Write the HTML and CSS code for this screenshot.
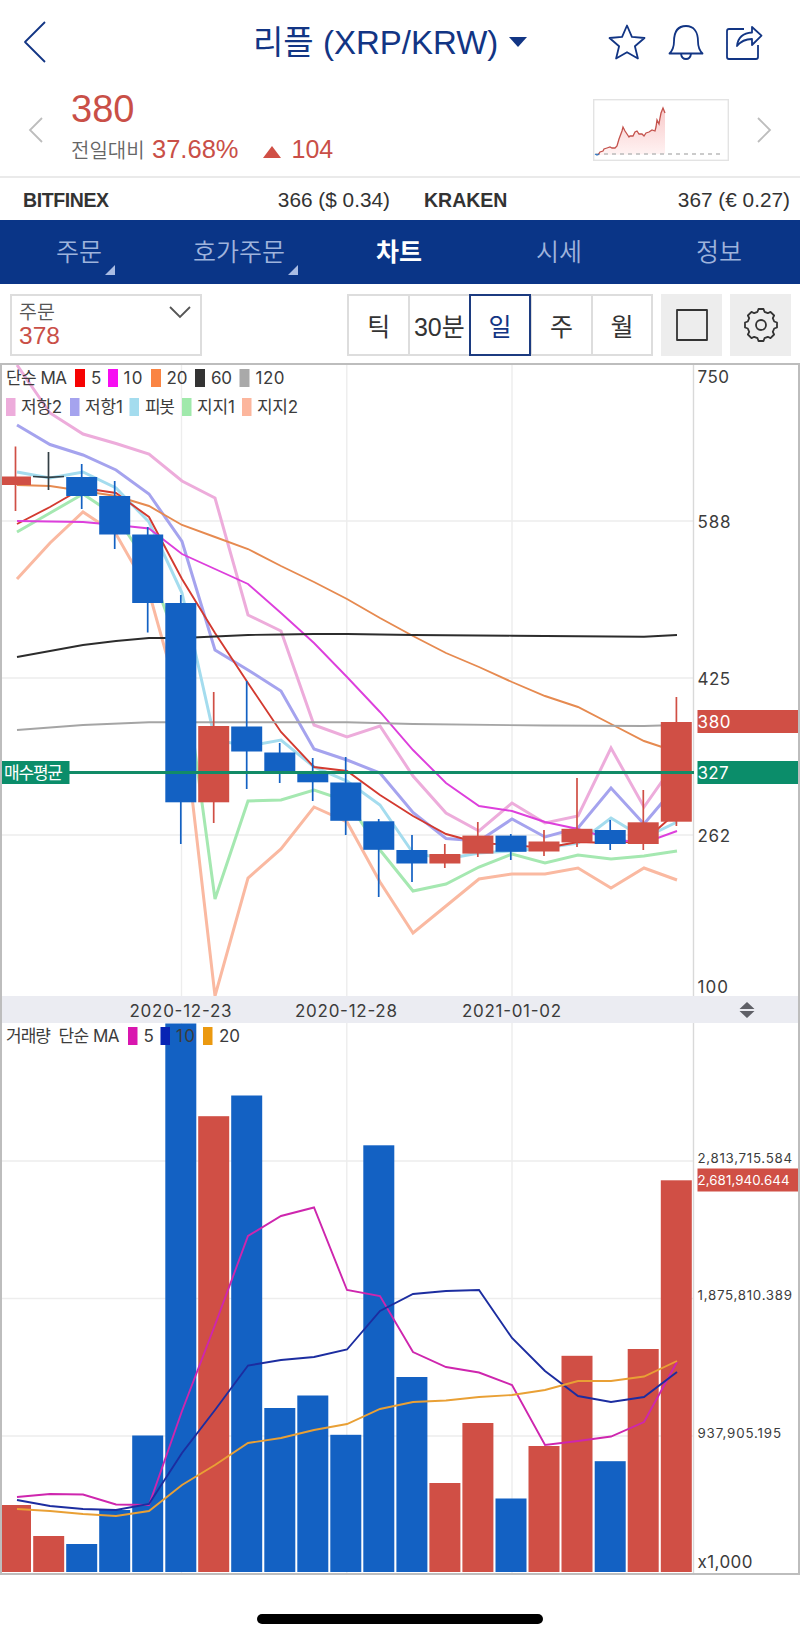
FILE: index.html
```html
<!DOCTYPE html>
<html lang="ko">
<head>
  <meta charset="utf-8">
  <title>리플 (XRP/KRW)</title>
  <link rel="stylesheet" href="styles.css">
</head>
<body>
  <header class="header">
    <svg class="back" width="24" height="44" viewBox="0 0 24 44"><path d="M22 2 2 22 22 42"/></svg>
    <h1 class="title">리플 (XRP/KRW)</h1>
    <span class="caret"></span>
    <div class="headerIcons">
      <svg width="38" height="38" viewBox="0 0 38 38"><path d="M19 2.500l4.900 11.300 12.600 1.200-9.600 8.300 3 12.200L19 29.200 8.100 35.500l3-12.200L1.500 15l12.600-1.200z"/></svg>
      <svg width="38" height="38" viewBox="0 0 38 38"><path d="M2.500 30.500c2.800-2.800 4.500-5.500 4.500-12C7 9 11 3 19 3s12 6 12 15.500c0 6.500 1.700 9.200 4.500 12zM14 31c.5 3.300 2.300 5 5 5s4.500-1.700 5-5"/></svg>
      <svg width="38" height="38" viewBox="2 0 38 38"><path d="M20 6H5Q3 6 3 8v26q0 2 2 2h27q2 0 2-2V22M13 23c1-9 6-13 15-13.500V4l9.500 8.700L28 22v-6c-7 0-11 2-15 7z"/></svg>
    </div>
  </header>

  <section class="summary">
    <svg class="arrow" width="16" height="26" viewBox="0 0 16 26"><path d="M14 1 2 13 14 25"/></svg>
    <div class="price">
      <div class="priceNow">380</div>
      <div class="change">
        <span class="changeLabel">전일대비</span>
        <span class="changeRate">37.68%</span>
        <span class="upMark"></span>
        <span class="changeValue">104</span>
      </div>
    </div>
    <svg class="spark" width="136" height="62" viewBox="593 99 136 62">
      <defs>
        <linearGradient id="fade" x1="0" y1="0" x2="0" y2="1">
          <stop offset="0" stop-color="#f8c9c9"/>
          <stop offset="1" stop-color="#fff3f3"/>
        </linearGradient>
      </defs>
      <rect class="sparkBox" x="593.7" y="99.700" width="134.600" height="60.600"/>
      <path fill="url(#fade)" d="M598 155l2-3 3-1 1-2 3-1 3-1 2 1 3 0 2-2 2-7 3-8 1-4 2 4 2 3 2 3 1-1 3 0 2-4 2-1 2 3 3 0 2 2 2-3 3-1 3-2 3 1 1-4 1-7 2 4 1-6 1-5 2-5 2 5V154z"/>
      <path class="sparkBase" d="M596 154H724"/>
      <path class="sparkLine" d="M598 155l2-3 3-1 1-2 3-1 3-1 2 1 3 0 2-2 2-7 3-8 1-4 2 4 2 3 2 3 1-1 3 0 2-4 2-1 2 3 3 0 2 2 2-3 3-1 3-2 3 1 1-4 1-7 2 4 1-6 1-5 2-5 2 5"/>
      <path class="sparkStart" d="M595 154l2 1 2-1"/>
    </svg>
    <svg class="arrow" width="16" height="26" viewBox="0 0 16 26"><path d="M2 1 14 13 2 25"/></svg>
  </section>

  <section class="markets">
    <div class="market"><b class="narrow">BITFINEX</b><span>366 ($ 0.34)</span></div>
    <div class="market"><b>KRAKEN</b><span>367 (€ 0.27)</span></div>
  </section>

  <nav class="tabs">
    <a class="tab more">주문</a>
    <a class="tab more">호가주문</a>
    <a class="tab active">차트</a>
    <a class="tab">시세</a>
    <a class="tab">정보</a>
  </nav>

  <div class="toolbar">
    <div class="order">
      <div>
        <div class="orderLabel">주문</div>
        <div class="orderPrice">378</div>
      </div>
      <svg width="22" height="13" viewBox="0 0 22 13"><path d="M1 1 11 11 21 1"/></svg>
    </div>
    <div class="periods">
      <button class="period">틱</button>
      <button class="period">30분</button>
      <button class="period selected">일</button>
      <button class="period">주</button>
      <button class="period">월</button>
    </div>
    <button class="tool"><svg width="34" height="34" viewBox="0 0 34 34"><rect x="2" y="2" width="30" height="30"/></svg></button>
    <button class="tool"><svg width="34" height="34" viewBox="-17 -17 34 34"><path d="M-3.500-13.200-2.500-16H2.500L3.500-13.200 6.800-11.800 9.500-13.100 13.100-9.500 11.800-6.800 13.200-3.500 16-2.500V2.500L13.200 3.500 11.800 6.800 13.100 9.500 9.500 13.100 6.800 11.800 3.500 13.200 2.500 16H-2.500L-3.500 13.200-6.800 11.800-9.500 13.100-13.100 9.500-11.800 6.800-13.200 3.500-16 2.500V-2.500L-13.200-3.500-11.800-6.800-13.100-9.500-9.500-13.100-6.800-11.800z"/><circle r="5"/></svg></button>
  </div>

  <main class="chart">
    <!-- price -->
    <svg class="pane" width="796" height="631" viewBox="2 365 796 631">
      <path class="grid" d="M2 521H694M2 678H694M2 835H694M181.500 365V996M346.800 365V996M512 365V996"/>
      <path class="axis" d="M693.500 365V996"/>

      <g class="pivot">
        <polyline stroke="#edacdb" points="17,365 50,413 83,434 116,443.500 149,454 182,481 215,498 248,615 281,631 314,725 347,737 380,726 413,776 446,813 479,831 512,803 545,823 578,816 611,748 644,807 677,760"/>
        <polyline stroke="#a5a3ee" points="17,425 50,444.500 83,455 116,470 149,494 182,541.500 215,650 248,670 281,691 314,749 347,760 380,773 413,812.500 446,838.500 479,841 512,819 545,837 578,828 611,788 644,824 677,785"/>
        <polyline stroke="#a4dcee" points="17,472 50,478 83,472 116,488 149,522 182,593 215,740 248,746 281,740 314,767 347,781 380,805 413,853 446,859 479,853 512,851 545,848 578,843 611,818 644,838 677,822"/>
        <polyline stroke="#a5e8b1" points="17,532 50,513 83,494 116,516 149,566 182,655 215,899 248,801 281,800 314,790 347,801 380,850 413,891 446,884 479,867 512,854 545,863 578,855 611,859 644,856 677,851"/>
        <polyline stroke="#fab9a1" points="17,579 50,543 83,512 116,534 149,592 182,710 215,996 248,878 281,849 314,807 347,822 380,882 413,933 446,906 479,879 512,874 545,874 578,868 611,888 644,868 677,880"/>
      </g>
      <g class="average">
        <polyline stroke="#d33a30" points="17,524 50,507 83,488 116,493 149,517 182,579 215,633 248,683 281,732 314,767 347,771 380,795 413,816 446,834 479,843 512,845 545,848 578,842 611,843 644,841 677,812"/>
        <polyline stroke="#dd3fdc" points="17,521 50,521.500 83,522 116,525 149,528.500 182,554 215,569 248,584 281,613 314,643 347,677 380,712 413,750 446,783 479,806 512,811 545,822 578,829 611,839 644,843 677,831"/>
        <polyline stroke="#e68a50" points="17,485 50,486 83,491 116,496 149,506 182,525 215,537 248,549 281,566 314,582 347,599 380,618 413,636 446,653 479,667 512,682 545,696 578,707 611,724 644,741 677,752"/>
        <polyline stroke="#2c2c2c" points="17,657 50,651 83,645 116,641 149,638 182,638 215,636.500 248,635 281,634.500 314,634 347,634 413,635 512,635.700 644,636.700 677,635"/>
        <polyline stroke="#a5a5a5" points="17,730 83,725 149,722.300 347,722.300 413,724 545,725.500 644,726 677,725"/>
      </g>

      <g class="wick">
        <path class="up" d="M15.500 446.500V511M213.700 692V823M444.800 844V868M477.800 822V857M544 830V856M577 778V847M643.300 790V850M676.400 697V826"/>
        <path class="down" d="M81.700 464V509M114.700 481V549M147.700 527V632.500M180.800 595V844M246.700 681V789M279.700 743V783M312.700 758V801M345.700 757V835M378.700 819V897M412 835V882M510.800 834V860M610.200 820V850"/>
        <path class="flat" d="M48.500 452V490M33 476.500 48.500 477.300 64 476.500"/>
      </g>
      <g class="body">
        <rect class="up" x="2" y="476.500" width="29" height="8.500"/>
        <rect class="down" x="66.200" y="477" width="31" height="19"/>
        <rect class="down" x="99.200" y="496" width="31" height="38.500"/>
        <rect class="down" x="132.200" y="534.500" width="31" height="68.500"/>
        <rect class="down" x="165.300" y="603" width="31" height="199.300"/>
        <rect class="up" x="198.200" y="726" width="31" height="76.300"/>
        <rect class="down" x="231.200" y="726.500" width="31" height="25"/>
        <rect class="down" x="264.300" y="752.500" width="31" height="19.500"/>
        <rect class="down" x="297.300" y="772" width="31" height="10.300"/>
        <rect class="down" x="330.300" y="782.500" width="31" height="38.300"/>
        <rect class="down" x="363.300" y="821.300" width="31" height="28.500"/>
        <rect class="down" x="396.400" y="850" width="31" height="13.500"/>
        <rect class="up" x="429.400" y="854" width="31" height="9.500"/>
        <rect class="up" x="462.400" y="835.600" width="31" height="18"/>
        <rect class="down" x="495.500" y="835.600" width="31" height="16.200"/>
        <rect class="up" x="528.500" y="841.500" width="31" height="10"/>
        <rect class="up" x="561.500" y="828.800" width="31" height="13.600"/>
        <rect class="down" x="594.700" y="830" width="31" height="14"/>
        <rect class="up" x="627.700" y="822.300" width="31" height="21.700"/>
        <rect class="up" x="660.800" y="722" width="31" height="99.700"/>
      </g>

      <path class="myLine" d="M2 772.500H694"/>
      <rect class="myTag" x="2" y="761" width="67.500" height="23"/>
      <text class="onTag" x="4" y="778.500" textLength="59">매수평균</text>

      <text x="6" y="384" textLength="61">단순 MA</text>
      <rect fill="#f60303" x="75" y="369" width="10" height="18"/><text x="91" y="384">5</text>
      <rect fill="#f70df2" x="108" y="369" width="10" height="18"/><text x="123.500" y="384" textLength="19">10</text>
      <rect fill="#fa8443" x="151" y="369" width="10" height="18"/><text x="166.500" y="384" textLength="21">20</text>
      <rect fill="#333333" x="195" y="369" width="10" height="18"/><text x="211" y="384" textLength="21">60</text>
      <rect fill="#a9a9a9" x="239.500" y="369" width="10" height="18"/><text x="255.500" y="384" textLength="29">120</text>

      <rect fill="#edacdb" x="6" y="398" width="9.500" height="18"/><text x="21" y="412.500" textLength="41">저항2</text>
      <rect fill="#a5a3ee" x="70" y="398" width="9.500" height="18"/><text x="85" y="412.500" textLength="38">저항1</text>
      <rect fill="#a4dcee" x="129.500" y="398" width="9.500" height="18"/><text x="145" y="412.500" textLength="30">피봇</text>
      <rect fill="#a0e9ab" x="182" y="398" width="9.500" height="18"/><text x="197" y="412.500" textLength="38">지지1</text>
      <rect fill="#fcb69d" x="242" y="398" width="9.500" height="18"/><text x="257" y="412.500" textLength="41">지지2</text>

      <text x="697.500" y="382.700" textLength="31.500">750</text>
      <text x="697.500" y="528" textLength="33">588</text>
      <text x="697.500" y="684.500" textLength="32.500">425</text>
      <text x="697.500" y="842" textLength="32.500">262</text>
      <text x="697.500" y="992.700" textLength="30.500">100</text>
      <rect class="up" x="697.500" y="710" width="101" height="23"/>
      <text class="onTag" x="697.500" y="728.300" textLength="33">380</text>
      <rect class="myTag" x="697.500" y="761" width="101" height="23"/>
      <text class="onTag" x="697.500" y="778.700" textLength="31">327</text>
    </svg>

    <!-- dates -->
    <svg class="pane dates" width="796" height="27" viewBox="2 996 796 27">
      <text x="129.500" y="1016.500" textLength="102">2020-12-23</text>
      <text x="295" y="1016.500" textLength="102">2020-12-28</text>
      <text x="462" y="1016.500" textLength="99">2021-01-02</text>
      <path fill="#5f6067" d="M739.500 1009 747 1002l7.500 7zM739.500 1011h15L747 1018z"/>
    </svg>

    <!-- volume -->
    <svg class="pane" width="796" height="550" viewBox="2 1023 796 550">
      <path class="grid" d="M2 1161H694M2 1298.500H694M2 1436H694M181.500 1023V1573M346.800 1023V1573M512 1023V1573"/>
      <path class="axis" d="M693.500 1023V1573"/>
      <g class="body">
        <rect class="up" x="2" y="1505" width="29" height="67"/>
        <rect class="up" x="33.200" y="1536" width="31" height="36"/>
        <rect class="down" x="66.200" y="1544" width="31" height="28"/>
        <rect class="down" x="99.200" y="1510" width="31" height="62"/>
        <rect class="down" x="132.200" y="1435.500" width="31" height="136.500"/>
        <rect class="down" x="165.300" y="1023.500" width="31" height="548.500"/>
        <rect class="up" x="198.200" y="1116.200" width="31" height="455.800"/>
        <rect class="down" x="231.200" y="1095.500" width="31" height="476.500"/>
        <rect class="down" x="264.300" y="1408" width="31" height="164"/>
        <rect class="down" x="297.300" y="1395.500" width="31" height="176.500"/>
        <rect class="down" x="330.300" y="1434.800" width="31" height="137.200"/>
        <rect class="down" x="363.300" y="1145.300" width="31" height="426.700"/>
        <rect class="down" x="396.400" y="1377" width="31" height="195"/>
        <rect class="up" x="429.400" y="1483" width="31" height="89"/>
        <rect class="up" x="462.400" y="1423" width="31" height="149"/>
        <rect class="down" x="495.500" y="1498.500" width="31" height="73.500"/>
        <rect class="up" x="528.500" y="1446" width="31" height="126"/>
        <rect class="up" x="561.500" y="1355.800" width="31" height="216.200"/>
        <rect class="down" x="594.700" y="1461.200" width="31" height="110.800"/>
        <rect class="up" x="627.700" y="1349" width="31" height="223"/>
        <rect class="up" x="660.800" y="1180.300" width="31" height="391.700"/>
      </g>
      <g class="average">
        <polyline stroke="#ce26ae" points="17,1497 50,1494 83,1494.500 116,1504.500 149,1505 182,1411 215,1325 248,1236 281,1216 314,1207.500 347,1290 380,1296 413,1352 446,1367 479,1372.500 512,1385 545,1445 578,1441 611,1436.500 644,1422 677,1362"/>
        <polyline stroke="#1c2da0" points="17,1500 50,1506 83,1509 116,1510 149,1504 182,1453 215,1410 248,1365.500 281,1360 314,1357 347,1349.500 380,1311 413,1294 446,1291 479,1290 512,1338 545,1371 578,1396 611,1402 644,1397 677,1372"/>
        <polyline stroke="#e9a035" points="17,1509 50,1511 83,1514 116,1516 149,1511 182,1485 215,1465 248,1443 281,1438 314,1430 347,1424 380,1409 413,1402 446,1400.500 479,1397 512,1395 545,1390 578,1381 611,1381 644,1376.500 677,1361"/>
      </g>

      <text x="6" y="1042" textLength="45">거래량</text>
      <text x="58.500" y="1042" textLength="61">단순 MA</text>
      <rect fill="#d916af" x="128" y="1027" width="9.500" height="18"/><text x="143.500" y="1042">5</text>
      <rect fill="#0724b4" x="160.500" y="1027" width="9.500" height="18"/><text x="176" y="1042" textLength="19">10</text>
      <rect fill="#eb990f" x="203" y="1027" width="9.500" height="18"/><text x="219" y="1042" textLength="21">20</text>

      <g class="small">
        <text x="697.500" y="1163" textLength="94.500">2,813,715.584</text>
        <text x="697.500" y="1300.300" textLength="94.500">1,875,810.389</text>
        <text x="697.500" y="1438.300" textLength="83.500">937,905.195</text>
        <rect class="up" x="697.500" y="1168.500" width="101" height="23"/>
        <text class="onTag" x="697.500" y="1185.300" textLength="92">2,681,940.644</text>
      </g>
      <text x="697.500" y="1568" textLength="55">x1,000</text>
    </svg>
  </main>

  <div class="homeBar"></div>
</body>
</html>
```

FILE: styles.css
```css
* {
  box-sizing: border-box;
}

body {
  margin: 0;
  width: 800px;
  height: 1639px;
  background-color: #ffffff;
  color: #333333;
  font-family: "Liberation Sans", "Noto Sans CJK KR", sans-serif;
  font-weight: 350;
  overflow: hidden;
}

svg {
  display: block;
  flex: none;
}

button {
  font-family: inherit;
  padding: 0;
}

.header {
  display: flex;
  align-items: center;
  height: 84px;
  padding-left: 23px;
  color: #123584;
}

.back,
.headerIcons svg {
  fill: none;
  stroke: #123584;
  stroke-width: 1.8;
  stroke-linejoin: round;
}

.title {
  margin: 2px 0 0 206px;
  width: 246px;
  font-size: 33px;
  font-weight: 400;
  line-height: 40px;
  white-space: nowrap;
}

.caret {
  margin-left: 10px;
  border-left: 9px solid transparent;
  border-right: 9px solid transparent;
  border-top: 10px solid #123584;
}

.headerIcons {
  display: flex;
  gap: 21px;
  margin-left: 81px;
}

.summary {
  display: flex;
  align-items: center;
  height: 92px;
  padding-left: 28px;
}

.arrow {
  fill: none;
  stroke: #bdbdbd;
  stroke-width: 1.8;
}

.price {
  width: 522px;
  margin-left: 27px;
  padding-bottom: 6px;
}

.priceNow {
  color: #c94f47;
  font-size: 38px;
  line-height: 43px;
}

.change {
  display: flex;
  align-items: baseline;
  height: 35px;
  line-height: 37px;
  color: #c94f47;
  font-size: 25.5px;
}

.changeLabel {
  width: 81px;
  color: #666666;
  font-size: 20px;
}

.upMark {
  margin: 0 11px 0 24px;
  border-left: 9.5px solid transparent;
  border-right: 9.5px solid transparent;
  border-bottom: 12px solid #d04f45;
}

.changeValue {
  font-size: 25px;
}

.spark {
  margin-right: 27px;
}

.spark path {
  stroke-width: 1.3;
}

.sparkBox {
  fill: none;
  stroke: #e3e3e3;
  stroke-width: 1.4;
}

.sparkLine {
  fill: none;
  stroke: #c4524c;
}

.sparkBase {
  stroke: #bbbbbb;
  stroke-dasharray: 4 4;
}

.sparkStart {
  fill: none;
  stroke: #3578c0;
}

.markets {
  display: flex;
  height: 44px;
  border-top: 2px solid #eaeaea;
}

.market {
  display: flex;
  justify-content: space-between;
  align-items: center;
  width: 400px;
  padding: 2px 10px 0 24px;
  font-size: 20.8px;
}

.market b {
  font-size: 19.5px;
  font-weight: 700;
}

.market .narrow {
  margin-left: -1px;
  letter-spacing: -0.4px;
}

.tabs {
  display: flex;
  height: 64px;
  background-color: #0a3587;
}

.tab {
  position: relative;
  width: 160px;
  padding-right: 2px;
  text-align: center;
  color: #9fb3dc;
  font-size: 25px;
  line-height: 65px;
}

.tab.active {
  color: #ffffff;
  font-weight: bold;
}

/* corner mark hangs off the end of the label */
.more::after {
  content: "";
  position: absolute;
  bottom: 9px;
  margin-left: 3px;
  border-left: 10px solid transparent;
  border-bottom: 10px solid #a9bce3;
}

.toolbar {
  display: flex;
  height: 79px;
  padding: 10px 9px 0 10px;
}

.order {
  display: flex;
  justify-content: space-between;
  width: 193px;
  height: 62px;
  padding: 4px 9px 0 7px;
  border: 2px solid #dddddd;
}

.order svg {
  margin-top: 6px;
  fill: none;
  stroke: #555555;
  stroke-width: 1.8;
}

.orderLabel {
  color: #555555;
  font-size: 19.5px;
  line-height: 24px;
}

.orderPrice {
  color: #c94f47;
  font-size: 24.5px;
  line-height: 23px;
}

.periods {
  display: flex;
  margin-left: 145px;
  width: 307px;
  height: 62px;
}

.period {
  flex: 1;
  margin-right: -1px;
  border: 2px solid #dddddd;
  border-right-width: 1px;
  background-color: #ffffff;
  color: #333333;
  font-size: 25px;
  font-weight: 400;
  white-space: nowrap;
}

.period:last-child {
  margin-right: 0;
  border-right-width: 2px;
}

.period.selected {
  position: relative;
  border: 2px solid #1c3b80;
  color: #123584;
}

.tool {
  display: flex;
  align-items: center;
  justify-content: center;
  width: 61px;
  height: 62px;
  margin-left: 8px;
  border: 0;
  background-color: #ededed;
}

.tool svg {
  fill: none;
  stroke: #333333;
  stroke-width: 1.8;
  stroke-linejoin: round;
}

.chart {
  border: 2px solid #bdbdbd;
}

.pane {
  fill: #3c3c3c;
  font-family: Inter, "Noto Sans CJK KR", sans-serif;
  font-size: 17px;
  font-weight: 400;
}

.dates {
  background-color: #ebecf2;
}

.small {
  font-size: 13.3px;
}

.grid {
  stroke: #ededed;
  stroke-width: 1.4;
}

.axis {
  stroke: #d9d9d9;
  stroke-width: 1.4;
}

.pivot polyline {
  fill: none;
  stroke-width: 3;
}

.average polyline {
  fill: none;
  stroke-width: 1.9;
}

.wick path {
  fill: none;
  stroke-width: 1.7;
}

.wick .up {
  stroke: #d04f45;
}

.wick .down {
  stroke: #1361c3;
}

.wick .flat {
  stroke: #333f45;
}

rect.up {
  fill: #d04f45;
}

rect.down {
  fill: #1361c3;
}

.myLine {
  stroke: #128b67;
  stroke-width: 2.8;
}

.myTag {
  fill: #0b8d6a;
}

.onTag {
  fill: #ffffff;
}

.homeBar {
  width: 286px;
  height: 10px;
  margin: 39px auto 0;
  border-radius: 5px;
  background-color: #000000;
}
```
